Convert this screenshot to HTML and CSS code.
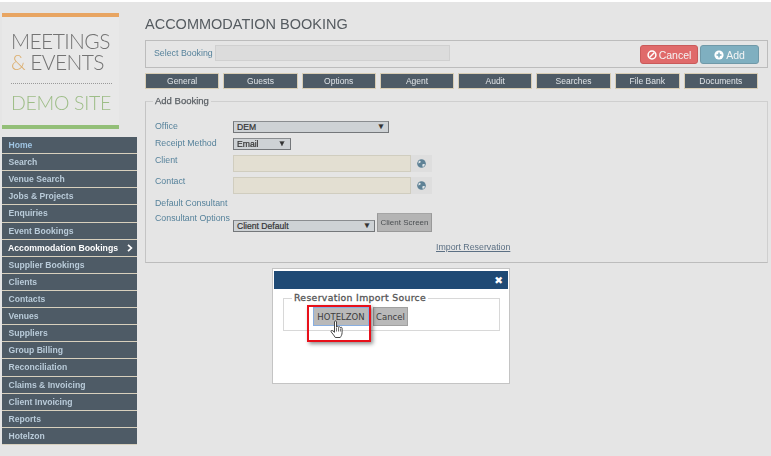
FILE: index.html
```html
<!DOCTYPE html>
<html lang="en">
<head>
<meta charset="utf-8">
<title>Accommodation Booking</title>
<link rel="stylesheet" href="styles.css">
</head>
<body>
<div class="page">
  <aside class="sidebar">
    <div class="logo">
      <div class="logo-name">MEETINGS<br><span class="amp">&amp;</span> EVENTS</div>
      <div class="logo-site">DEMO SITE</div>
    </div>
    <nav class="nav">
      <a class="nav-item home">Home</a>
      <a class="nav-item">Search</a>
      <a class="nav-item">Venue Search</a>
      <a class="nav-item">Jobs &amp; Projects</a>
      <a class="nav-item">Enquiries</a>
      <a class="nav-item">Event Bookings</a>
      <a class="nav-item active">Accommodation Bookings<svg class="chev" viewBox="0 0 6 8" width="6" height="8"><path d="M1 .8 4.4 4 1 7.2" fill="none" stroke="#fff" stroke-width="1.7"/></svg></a>
      <a class="nav-item">Supplier Bookings</a>
      <a class="nav-item">Clients</a>
      <a class="nav-item">Contacts</a>
      <a class="nav-item">Venues</a>
      <a class="nav-item">Suppliers</a>
      <a class="nav-item">Group Billing</a>
      <a class="nav-item">Reconciliation</a>
      <a class="nav-item">Claims &amp; Invoicing</a>
      <a class="nav-item">Client Invoicing</a>
      <a class="nav-item">Reports</a>
      <a class="nav-item">Hotelzon</a>
    </nav>
  </aside>

  <main class="main">
    <h1 class="title">ACCOMMODATION BOOKING</h1>
    <section class="select-bar">
      <span class="label select-label">Select Booking</span>
      <div class="select-input"></div>
      <button class="btn btn-cancel">
        <svg viewBox="0 0 10 10" width="10" height="10"><circle cx="5" cy="5" r="3.9" fill="none" stroke="#fff" stroke-width="1.5"/><path d="M2.5 7.5 7.5 2.5" stroke="#fff" stroke-width="1.5"/></svg>Cancel</button>
      <button class="btn btn-add">
        <svg viewBox="0 0 10 10" width="10" height="10"><circle cx="5" cy="5" r="4.6" fill="#fff"/><path d="M5 2.5v5M2.5 5h5" stroke="#7fafc0" stroke-width="1.5"/></svg>Add</button>
    </section>
    <div class="tabs">
      <a class="tab">General</a><a class="tab">Guests</a><a class="tab">Options</a><a class="tab">Agent</a><a class="tab">Audit</a><a class="tab">Searches</a><a class="tab tab-narrow">File Bank</a><a class="tab">Documents</a>
    </div>
    <fieldset class="add-booking">
      <legend>Add Booking</legend>
      <div class="row row-office">
        <span class="label">Office</span>
        <div class="dropdown dd-office">DEM<i class="arrow">▼</i></div>
      </div>
      <div class="row row-receipt">
        <span class="label">Receipt Method</span>
        <div class="dropdown dd-receipt">Email<i class="arrow">▼</i></div>
      </div>
      <div class="row row-client">
        <span class="label">Client</span>
        <div class="lookup"><div class="lookup-input"></div><span class="lookup-icon"><svg viewBox="0 0 10 10" width="9" height="9"><circle cx="5" cy="5" r="4.8" fill="#5f8296"/><path d="M2 2.200c1.500-.8 2.500.3 2 1.500-.5 1-2 .7-2.600 1.500M6 6c1-.6 2.400-.4 2.800 0-.3 1.500-1.500 2.500-2.500 2.700C6 7.800 5.700 6.800 6 6Z" fill="#dfe5e8"/></svg></span></div>
      </div>
      <div class="row row-contact">
        <span class="label">Contact</span>
        <div class="lookup"><div class="lookup-input"></div><span class="lookup-icon"><svg viewBox="0 0 10 10" width="9" height="9"><circle cx="5" cy="5" r="4.8" fill="#5f8296"/><path d="M2 2.200c1.500-.8 2.500.3 2 1.500-.5 1-2 .7-2.600 1.500M6 6c1-.6 2.400-.4 2.800 0-.3 1.500-1.500 2.500-2.500 2.700C6 7.800 5.700 6.800 6 6Z" fill="#dfe5e8"/></svg></span></div>
      </div>
      <div class="row row-default"><span class="label">Default Consultant</span></div>
      <div class="row row-options">
        <span class="label">Consultant Options</span>
        <div class="dropdown dd-options">Client Default<i class="arrow">▼</i></div>
        <button class="client-screen">Client Screen</button>
      </div>
      <div class="import-row"><a class="import-link">Import Reservation</a></div>
    </fieldset>
  </main>
</div>

<div class="modal">
  <div class="modal-head"><span class="modal-close">✖</span></div>
  <fieldset class="modal-set">
    <legend>Reservation Import Source</legend>
    <div class="modal-actions">
      <button class="modal-btn hotelzon">HOTELZON</button><button class="modal-btn modal-cancel">Cancel</button>
    </div>
  </fieldset>
</div>
<div class="callout"></div>
<svg class="hand" viewBox="0 0 14 19" width="14" height="19"><path d="M4.500 1.800c0-1.200 2-1.200 2 0v5.200c.3-.9 1.900-.9 2 .2.400-.8 1.800-.6 1.900.4.500-.6 1.700-.3 1.700.7v4.200c0 2.400-1.200 4-1.900 5H5.300c-1-1.600-2.300-3.400-4-5.400-.9-1.200.5-2.300 1.500-1.300l1.700 1.500Z" fill="#fff" stroke="#333" stroke-width=".9" stroke-linejoin="round"/><path d="M6.500 7.500v4M8.500 7.500v4M10.400 8.500v3" stroke="#333" stroke-width=".7" fill="none"/></svg>
</body>
</html>
```
FILE: styles.css
```css
* { box-sizing: border-box; }
html, body { margin: 0; height: 100%; }
body {
  width: 771px;
  height: 456px;
  overflow: hidden;
  background: #e5e5e5;
  border-top: 2px solid #fff;
  font-family: "Liberation Sans", Arial, sans-serif;
  position: relative;
  filter: blur(0.3px);
}
.page { display: flex; align-items: flex-start; padding-left: 2px; }

/* sidebar */
.sidebar { width: 135px; flex: none; padding-top: 11px; }
.logo {
  width: 117px;
  height: 116px;
  border-top: 4px solid #e8a562;
  border-bottom: 4px solid #93bf78;
  background: #e8e8e8;
  padding-top: 13px;
  margin-bottom: 8px;
  font-family: Lato, "Liberation Sans", sans-serif;
  font-weight: 300;
  text-align: left;
}
.logo-name {
  font-size: 21px;
  line-height: 21px;
  color: #737373;
  padding-left: 9px;
  padding-bottom: 11px;
  letter-spacing: -0.6px;
}
.amp { color: #dcae6d; }
.logo-site {
  margin: 0 7px 0 9px;
  border-top: 1px dotted #999;
  padding-top: 7px;
  font-size: 19.500px;
  line-height: 24px;
  color: #9dbd87;
  letter-spacing: -0.3px;
  white-space: nowrap;
}
.nav { display: flex; flex-direction: column; }
.nav-item {
  height: 17.12px;
  background: #4e5b66;
  border-bottom: 1px solid #d8d0bd;
  color: #b9cbd9;
  font-size: 8.600px;
  font-weight: bold;
  line-height: 16px;
  padding-left: 6.500px;
  white-space: nowrap;
  display: flex;
  align-items: center;
}
.nav-item.home { color: #9fc4e2; }
.nav-item.active { color: #fff; font-size: 8.700px; padding-left: 6px; }
.chev { margin-left: 9px; }

/* main */
.main { width: 623px; margin-left: 8px; flex: none; }
.title {
  margin: 14px 0 0;
  font-size: 14.500px;
  line-height: 16px;
  font-weight: normal;
  color: #555b60;
}
.label { font-size: 8.800px; color: #56829b; }
.select-bar {
  margin-top: 8px;
  height: 28px;
  border: 1px solid #bcbcbc;
  display: flex;
  align-items: center;
  padding: 0 8px 0 8px;
}
.select-label { width: 61px; flex: none; margin-top: -3px; }
.select-input { width: 235px; height: 16px; background: #dcdcdc; border: 1px solid #d0d0d0; margin-top: -2px; }
.btn {
  height: 19px;
  border-radius: 3px;
  color: #f4f4f4;
  font: 10.500px "Liberation Sans", Arial, sans-serif;
  padding: 0;
  display: flex;
  align-items: center;
  justify-content: center;
  gap: 2px;
  margin-top: 1px;
}
.btn-cancel { width: 58px; margin-left: auto; background: #e06a6a; border: 1px solid #c95a5a; }
.btn-add { width: 59px; margin-left: 2px; background: #7fafc0; border: 1px solid #7099a8; }
.tabs { display: flex; gap: 4px; margin: 5px 10px 0 0; height: 16px; }
.tab {
  flex: 1 1 0;
  background: #4e5b66;
  border: 1px solid #d8cdb4;
  color: #e0e4e7;
  font-size: 8.500px;
  line-height: 15px;
  text-align: center;
}
.tab-narrow { flex: 0 0 65px; }
.add-booking {
  margin: 7px 0 0;
  height: 167px;
  border: 1px solid #cfcfcf;
  border-left-color: #c4c4c4;
  border-bottom-color: #bcbcbc;
  padding: 15px 0 0 9px;
  min-width: 0;
}
.add-booking legend {
  padding: 0 2px;
  margin-left: -2px;
  font-size: 9.500px;
  font-weight: normal;
  color: #5c6166;
  line-height: 10px;
  -webkit-text-stroke: 0.25px #5c6166;
}
.row { display: flex; align-items: flex-start; position: relative; }
.row > .label { width: 78px; flex: none; line-height: 11px; }
.row-office { height: 17px; }
.row-receipt { height: 17px; }
.row-client { height: 22px; }
.row-contact { height: 21px; }
.row-default { height: 11px; }
.row-options { height: 29px; padding-top: 4px; }
.row-contact .label { margin-top: -1px; }
.dropdown {
  height: 12px;
  background: #ced2d5;
  border: 1px solid #74777a;
  border-top-color: #8a8d90;
  font-size: 8.600px;
  line-height: 11px;
  color: #333;
  padding-left: 3px;
  position: relative;
  font-weight: normal;
  -webkit-text-stroke: 0.2px #333;
}
.arrow {
  position: absolute;
  right: 3px;
  top: 0;
  font-style: normal;
  font-size: 8px;
  line-height: 10px;
  color: #333;
}
.dd-office { width: 156px; }
.dd-receipt { width: 58px; }
.dd-receipt .arrow { right: 4px; }
.dd-options { width: 142px; margin-top: 7px; }
.lookup { display: flex; width: 199px; height: 17px; }
.lookup-input { width: 178px; background: #e3dfd2; border: 1px solid #d0cdbf; }
.lookup-icon { width: 21px; background: #dedede; display: flex; align-items: center; justify-content: center; }
.client-screen {
  width: 55px;
  height: 19px;
  margin: 0 0 0 2px;
  padding: 0;
  background: #b4b4b4;
  border: 1px solid #999;
  border-top-color: #a5a5a5;
  color: #4b4f52;
  font: 8px "Liberation Sans", Arial, sans-serif;
}
.import-row { padding-left: 281px; margin-top: -2px; }
.import-link { font-size: 8.800px; color: #5c7084; text-decoration: underline; }

/* modal */
.modal {
  position: absolute;
  left: 272px;
  top: 266px;
  width: 238px;
  height: 116px;
  background: #fff;
  border: 1px solid #c4c4c4;
  padding: 2px 1px 0;
}
.modal-head {
  height: 18px;
  background: #1f4a75;
  display: flex;
  justify-content: flex-end;
  align-items: center;
  padding-right: 5px;
}
.modal-close { color: #fff; font: 10.500px "DejaVu Sans", sans-serif; }
.modal-set {
  margin: 4px 8px 0 9px;
  height: 38px;
  border: 1px solid #d8d8d8;
  padding: 0 0 0 8px;
  min-width: 0;
}
.modal-set legend {
  padding: 0 2px;
  margin-left: 0;
  line-height: 10px;
  color: #555;
  font-family: "DejaVu Sans", sans-serif;
  font-size: 9.300px;
  letter-spacing: 0.33px;
  -webkit-text-stroke: 0.3px #555;
}
.modal-actions { display: flex; gap: 4px; padding: 4px 0 0 21px; }
.modal-btn {
  height: 19px;
  padding: 0;
  background: #b9b9b9;
  border: 1px solid #a0a0a0;
  color: #3c3c3c;
  font: 8.500px "DejaVu Sans", sans-serif;
}
.hotelzon { width: 56px; border-color: #88aee0; }
.modal-cancel { width: 35px; }
.callout {
  position: absolute;
  left: 307px;
  top: 303px;
  width: 64px;
  height: 37px;
  border: 2px solid #e8101a;
  box-shadow: 2px 2px 4px rgba(0, 0, 0, 0.45);
}
.hand { position: absolute; left: 330px; top: 318px; }
```
